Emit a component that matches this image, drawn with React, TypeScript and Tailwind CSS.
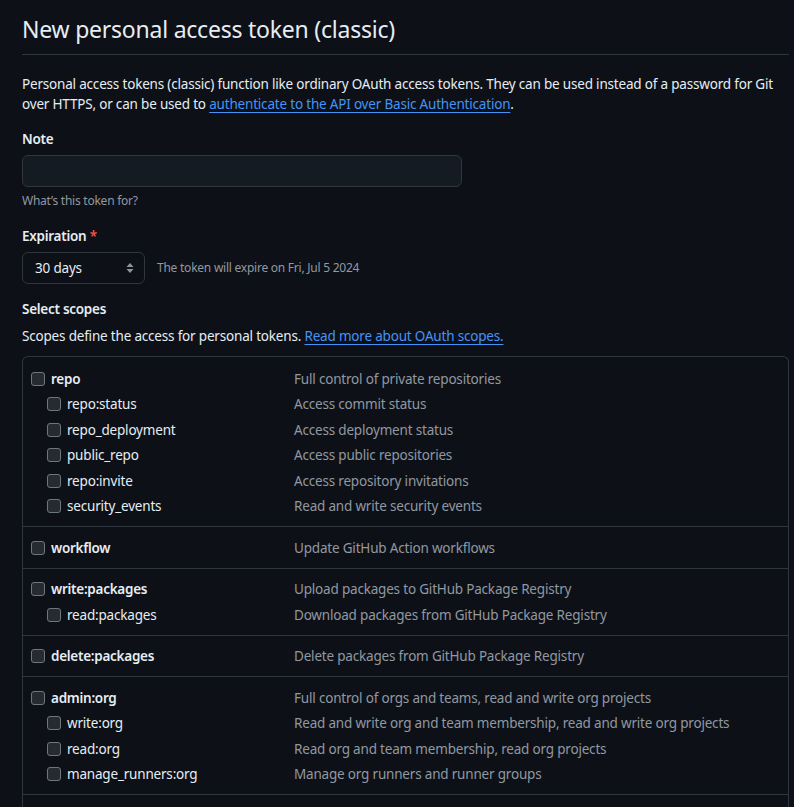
import React from 'react';

type Scope = { name: string; desc: string; children?: { name: string; desc: string }[] };

const scopes: Scope[] = [
  {
    name: 'repo',
    desc: 'Full control of private repositories',
    children: [
      { name: 'repo:status', desc: 'Access commit status' },
      { name: 'repo_deployment', desc: 'Access deployment status' },
      { name: 'public_repo', desc: 'Access public repositories' },
      { name: 'repo:invite', desc: 'Access repository invitations' },
      { name: 'security_events', desc: 'Read and write security events' },
    ],
  },
  { name: 'workflow', desc: 'Update GitHub Action workflows' },
  {
    name: 'write:packages',
    desc: 'Upload packages to GitHub Package Registry',
    children: [{ name: 'read:packages', desc: 'Download packages from GitHub Package Registry' }],
  },
  { name: 'delete:packages', desc: 'Delete packages from GitHub Package Registry' },
  {
    name: 'admin:org',
    desc: 'Full control of orgs and teams, read and write org projects',
    children: [
      { name: 'write:org', desc: 'Read and write org and team membership, read and write org projects' },
      { name: 'read:org', desc: 'Read org and team membership, read org projects' },
      { name: 'manage_runners:org', desc: 'Manage org runners and runner groups' },
    ],
  },
];

function Box() {
  return <span className="inline-block w-[14px] h-[14px] shrink-0 rounded-[3px] border border-[#6e7681] bg-[#272b31]" />;
}

function ScopeRow({ name, desc, child }: { name: string; desc: string; child?: boolean }) {
  return (
    <div className="flex items-center h-[25.5px]">
      <div className={`flex items-center w-[271px] shrink-0 ${child ? 'pl-[24px]' : 'pl-[8px]'}`}>
        <Box />
        <span className={`ml-[6px] text-[#e6edf3] ${child ? '' : 'font-semibold tracking-[-0.02em]'}`}>{name}</span>
      </div>
      <span className="text-[#9198a1]">{desc}</span>
    </div>
  );
}

export default function App() {
  return (
    <div
      className="min-h-screen bg-[#0d1117] text-[#e6edf3] text-[13.5px] tracking-[-0.014em] leading-[20px] pl-[22px] pr-[5px]"
      style={{ fontFamily: '"Noto Sans", "Open Sans", sans-serif' }}
    >
      <h1 className="pt-[14px] pb-[10px] text-[23px] tracking-[-0.01em] leading-[30px] font-normal border-b border-[#30363d]">
        New personal access token (classic)
      </h1>

      <p className="mt-[19px] leading-[20px]">
        Personal access tokens (classic) function like ordinary OAuth access tokens. They can be used instead of a password for Git
        over HTTPS, or can be used to{' '}
        <a className="text-[#4493f8] underline underline-offset-[3px]">authenticate to the API over Basic Authentication</a>.
      </p>

      <div className="mt-[15px] font-semibold tracking-[-0.02em]">Note</div>
      <div className="mt-[6px] w-[440px] h-[32px] rounded-[6px] border border-[#30363d] bg-[#151b23]" />
      <div className="mt-[5px] text-[12px] tracking-[-0.02em] leading-[18px] text-[#9198a1]">What’s this token for?</div>

      <div className="mt-[16px] font-semibold tracking-[-0.02em]">
        Expiration <span className="text-[#f85149]">*</span>
      </div>
      <div className="mt-[6px] flex items-center">
        <div className="w-[123px] h-[32px] rounded-[6px] border border-[#30363d] bg-[#0d1117] flex items-center justify-between pl-[12px] pr-[10px]">
          <span>30 days</span>
          <svg width="8" height="12" viewBox="0 0 8 12" fill="#8d96a0">
            <path d="M4 1 L7.5 5 H0.5 Z" />
            <path d="M4 11 L7.5 7 H0.5 Z" />
          </svg>
        </div>
        <span className="ml-[12px] text-[12px] tracking-[-0.02em] text-[#9198a1]">The token will expire on Fri, Jul 5 2024</span>
      </div>

      <div className="mt-[15px] font-semibold tracking-[-0.02em] text-[13.5px]">Select scopes</div>
      <p className="mt-[7px]">
        Scopes define the access for personal tokens.{' '}
        <a className="text-[#4493f8] underline underline-offset-[3px]">Read more about OAuth scopes.</a>
      </p>

      <div className="mt-[10px] border border-[#30363d] rounded-t-[6px] border-b-0">
        {scopes.map((s, i) => (
          <div key={s.name} className={`pb-[7px] border-[#30363d] ${i > 0 ? 'border-t pt-[8px]' : 'pt-[9px]'}`}>
            <ScopeRow name={s.name} desc={s.desc} />
            {s.children?.map((c) => <ScopeRow key={c.name} name={c.name} desc={c.desc} child />)}
          </div>
        ))}
        <div className="border-t border-[#30363d] h-[20px]" />
      </div>
    </div>
  );
}
